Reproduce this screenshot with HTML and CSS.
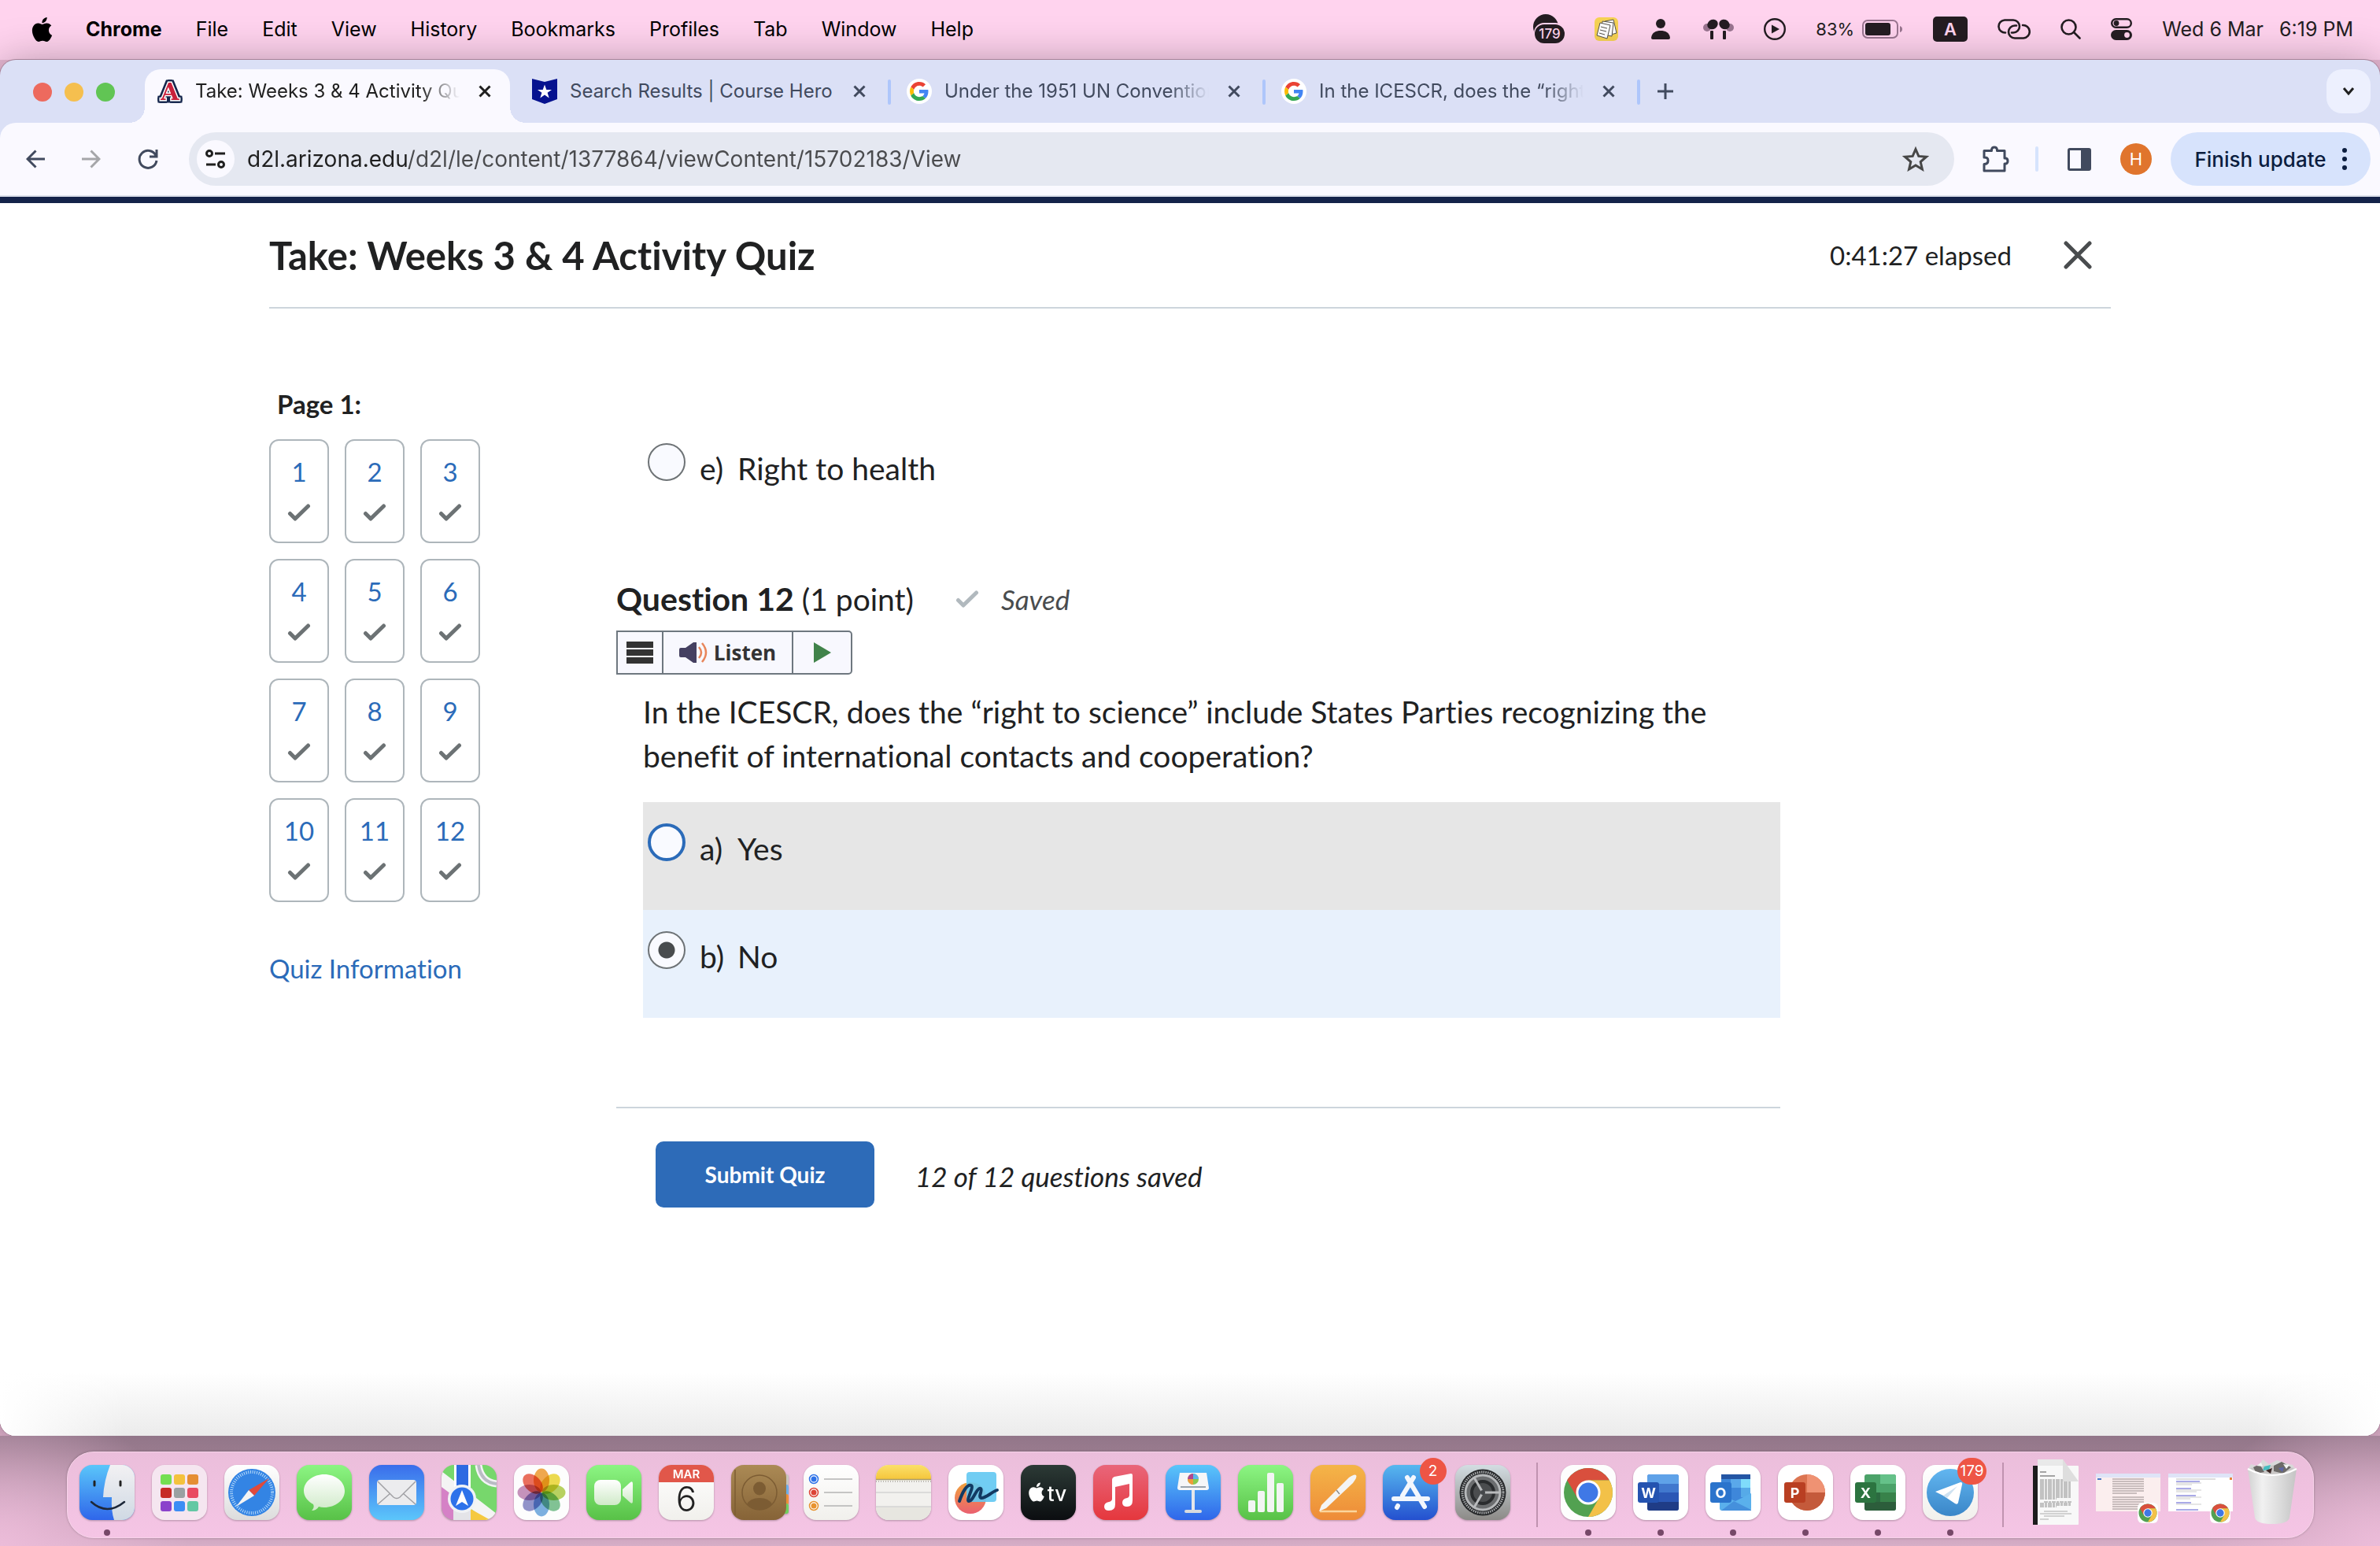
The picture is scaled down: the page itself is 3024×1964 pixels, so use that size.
FILE: index.html
```html
<!DOCTYPE html>
<html lang="en">
<head>
<meta charset="utf-8">
<meta name="viewport" content="width=device-width, initial-scale=1">
<title>Take: Weeks 3 &amp; 4 Activity Quiz</title>
<link rel="stylesheet" href="styles.css">
</head>
<body>
<svg class="defs" width="0" height="0" aria-hidden="true">
  <defs>
    <linearGradient id="g-sky" x1="0" y1="0" x2="0" y2="1"><stop offset="0" stop-color="#5ac6fa"/><stop offset="1" stop-color="#2f66ea"/></linearGradient>
    <linearGradient id="g-mail" x1="0" y1="0" x2="0" y2="1"><stop offset="0" stop-color="#3a6deb"/><stop offset="1" stop-color="#5cc6fb"/></linearGradient>
    <linearGradient id="g-green" x1="0" y1="0" x2="0" y2="1"><stop offset="0" stop-color="#8cf583"/><stop offset="1" stop-color="#58c147"/></linearGradient>
    <linearGradient id="g-white" x1="0" y1="0" x2="0" y2="1"><stop offset="0" stop-color="#ffffff"/><stop offset="1" stop-color="#dcdcdc"/></linearGradient>
    <linearGradient id="g-paper" x1="0" y1="0" x2="0" y2="1"><stop offset="0" stop-color="#ffffff"/><stop offset="1" stop-color="#f1f0ec"/></linearGradient>
    <linearGradient id="g-face" x1="0" y1="0" x2="0" y2="1"><stop offset="0" stop-color="#f2f1f3"/><stop offset="1" stop-color="#cfd9e4"/></linearGradient>
    <linearGradient id="g-brown" x1="0" y1="0" x2="0" y2="1"><stop offset="0" stop-color="#ab8a55"/><stop offset="1" stop-color="#866337"/></linearGradient>
    <linearGradient id="g-yellow" x1="0" y1="0" x2="0" y2="1"><stop offset="0" stop-color="#fbe06a"/><stop offset="1" stop-color="#f5c63c"/></linearGradient>
    <linearGradient id="g-black" x1="0" y1="0" x2="0" y2="1"><stop offset="0" stop-color="#2c3a36"/><stop offset="1" stop-color="#0b0d10"/></linearGradient>
    <linearGradient id="g-red" x1="0" y1="0" x2="0" y2="1"><stop offset="0" stop-color="#e9667a"/><stop offset="1" stop-color="#e5373d"/></linearGradient>
    <linearGradient id="g-orange" x1="0" y1="0" x2="0" y2="1"><stop offset="0" stop-color="#f4b548"/><stop offset="1" stop-color="#ee8b38"/></linearGradient>
    <linearGradient id="g-store" x1="0" y1="0" x2="0" y2="1"><stop offset="0" stop-color="#57b8ef"/><stop offset="1" stop-color="#2450cf"/></linearGradient>
    <linearGradient id="g-steel" x1="0" y1="0" x2="0" y2="1"><stop offset="0" stop-color="#d3dde2"/><stop offset="1" stop-color="#8c8a87"/></linearGradient>
    <linearGradient id="g-tele" x1="0" y1="0" x2="0" y2="1"><stop offset="0" stop-color="#62b6f0"/><stop offset="1" stop-color="#3a86c8"/></linearGradient>
    <linearGradient id="g-free" x1="0" y1="0" x2="0" y2="1"><stop offset="0" stop-color="#f0a23c"/><stop offset="1" stop-color="#ea6070"/></linearGradient>
    <linearGradient id="g-bubble" x1="0" y1="0" x2="0" y2="1"><stop offset="0" stop-color="#ffffff"/><stop offset="1" stop-color="#cfeac8"/></linearGradient>
    <linearGradient id="g-bin" x1="0" y1="0" x2="1" y2="0"><stop offset="0" stop-color="#d2d2d2"/><stop offset=".3" stop-color="#f1f1f1"/><stop offset=".7" stop-color="#d9d9d9"/><stop offset="1" stop-color="#c4c4c4"/></linearGradient>
    <clipPath id="tile"><rect width="70" height="70" rx="16"/></clipPath>
    <symbol id="check" viewBox="0 0 30 22"><path d="M3.500 12.500L10 19L26.500 3" fill="none" stroke="currentColor" stroke-width="5" stroke-linecap="round" stroke-linejoin="round"/></symbol>
    <symbol id="cross" viewBox="0 0 16 16"><path d="M1.500 1.500L14.500 14.500M14.500 1.500L1.500 14.500" stroke="currentColor" stroke-width="3"/></symbol>
    <symbol id="google" viewBox="0 0 64 64">
      <circle cx="32" cy="32" r="32" fill="#fff"/>
      <g transform="translate(8 8)">
        <path fill="#EA4335" d="M24 9.500c3.540 0 6.710 1.220 9.210 3.600l6.850-6.850C35.900 2.380 30.470 0 24 0 14.620 0 6.510 5.380 2.560 13.220l7.980 6.190C12.430 13.720 17.740 9.500 24 9.500z"/>
        <path fill="#4285F4" d="M46.980 24.550c0-1.570-.15-3.090-.38-4.550H24v9.020h12.940c-.58 2.960-2.260 5.480-4.780 7.180l7.730 6c4.510-4.180 7.090-10.360 7.090-17.650z"/>
        <path fill="#FBBC05" d="M10.530 28.590c-.48-1.450-.76-2.990-.76-4.590s.27-3.140.76-4.590l-7.980-6.190C.92 16.460 0 20.120 0 24c0 3.880.92 7.540 2.560 10.780l7.970-6.190z"/>
        <path fill="#34A853" d="M24 48c6.480 0 11.930-2.130 15.890-5.810l-7.730-6c-2.150 1.450-4.920 2.300-8.160 2.300-6.260 0-11.570-4.220-13.470-9.910l-7.980 6.190C6.510 42.620 14.620 48 24 48z"/>
      </g>
    </symbol>
    <symbol id="apple" viewBox="0 0 24 24"><path fill="currentColor" d="M12.152 6.896c-.948 0-2.415-1.078-3.960-1.040-2.040.027-3.910 1.183-4.961 3.014-2.117 3.675-.546 9.103 1.519 12.090 1.013 1.454 2.208 3.090 3.792 3.039 1.520-.065 2.090-.987 3.935-.987 1.831 0 2.350.987 3.960.948 1.637-.026 2.676-1.480 3.676-2.948 1.156-1.688 1.636-3.325 1.662-3.415-.039-.013-3.182-1.221-3.220-4.857-.026-3.040 2.480-4.494 2.597-4.559-1.429-2.090-3.623-2.324-4.390-2.376-2-.156-3.675 1.090-4.610 1.090zM15.530 3.830c.843-1.012 1.400-2.427 1.245-3.830-1.207.052-2.662.805-3.532 1.818-.78.896-1.454 2.338-1.273 3.714 1.338.104 2.715-.688 3.560-1.702"/></symbol>
    <symbol id="chrome" viewBox="0 0 70 70">
      <rect width="70" height="70" rx="16" fill="#fdfdfd"/>
      <g transform="translate(35 35)">
        <circle r="31" fill="#52a151"/>
        <path fill="#d94f3d" d="M-26.800-15.500A31 31 0 0 1 26.800-15.500L0-15.500L-13.400 7.750Z"/>
        <path fill="#f3c148" d="M26.800-15.500A31 31 0 0 1 0 31L13.400 7.750L0-15.500Z"/>
        <circle r="15.500" fill="#fff"/><circle r="12.500" fill="#3f78e6"/>
      </g>
    </symbol>
  </defs>
</svg>

<header class="menubar">
  <nav class="menus" aria-label="Menu bar">
    <button class="menu-logo" aria-label="Apple"><svg width="31" height="31"><use href="#apple"/></svg></button>
    <button class="menu menu-app">Chrome</button>
    <button class="menu">File</button>
    <button class="menu">Edit</button>
    <button class="menu">View</button>
    <button class="menu">History</button>
    <button class="menu">Bookmarks</button>
    <button class="menu">Profiles</button>
    <button class="menu">Tab</button>
    <button class="menu">Window</button>
    <button class="menu">Help</button>
  </nav>
  <div class="status">
    <svg width="40" height="38" viewBox="0 0 40 38"><circle cx="16" cy="16" r="16" fill="#241d22"/><rect x="1" y="11" width="40" height="27" rx="13" fill="#ffd3ee"/><rect x="2" y="13" width="38" height="24" rx="12" fill="#241d22"/><text x="21" y="31" font-size="17" text-anchor="middle" fill="#ffd3ee" font-weight="500">179</text></svg>
    <svg width="30" height="30" viewBox="0 0 30 30"><rect width="30" height="30" rx="6" fill="#f6d253"/><g fill="#fff" stroke="#55524a" stroke-width="1"><path d="M13 5L24 3L28 20L17 23Z"/><path d="M10 5L24 7L22 24L8 21Z"/><path d="M7 7L20 10L16 27L3 23Z"/><path d="M8 12L16 14M7 16L15 18M6 20L13 22"/></g></svg>
    <svg class="wide" width="24" height="26" viewBox="0 0 24 26"><circle cx="12" cy="6" r="6" fill="#241d22"/><path fill="#241d22" d="M0 24C1 17 6 15 12 15S23 17 24 24Q24 26 22 26H2Q0 26 0 24Z"/></svg>
    <svg width="39" height="26" viewBox="0 0 39 26"><g fill="#9a7590"><circle cx="5" cy="11" r="5"/><circle cx="34" cy="11" r="5"/></g><g fill="#241d22"><ellipse cx="12" cy="7" rx="7" ry="6" transform="rotate(-35 12 7)"/><ellipse cx="27" cy="7" rx="7" ry="6" transform="rotate(35 27 7)"/><rect x="9" y="15" width="4" height="11" rx="1"/><rect x="25" y="15" width="4" height="11" rx="1"/></g></svg>
    <svg width="28" height="28" viewBox="0 0 28 28"><circle cx="14" cy="14" r="12.800" fill="none" stroke="#241d22" stroke-width="2.400"/><path d="M10 8.500L20 14L10 19.500Z" fill="#241d22"/></svg>
    <span class="battery">83%<svg width="52" height="24" viewBox="0 0 52 24"><rect x="1" y="1" width="44" height="22" rx="6" fill="none" stroke="#9a7590" stroke-width="2"/><rect x="4" y="4" width="32" height="16" rx="3" fill="#241d22"/><path d="M48 8Q51 9 51 12T48 16Z" fill="#9a7590"/></svg></span>
    <svg width="44" height="32" viewBox="0 0 44 32"><rect width="44" height="32" rx="5" fill="#241d22"/><text x="22" y="24" font-size="22" font-weight="600" text-anchor="middle" fill="#ffd3ee">A</text></svg>
    <svg width="42" height="26" viewBox="0 0 42 26"><g fill="none" stroke="#241d22" stroke-width="2.600" stroke-linecap="round"><path d="M10 17.500A8 8 0 0 1 9 1.500H20A8 8 0 0 1 20 17.500H18"/><path d="M32 8A8 8 0 0 1 33 24.500H22A8 8 0 0 1 22 8.500H24"/></g></svg>
    <svg width="26" height="26" viewBox="0 0 26 26"><g fill="none" stroke="#241d22" stroke-width="2.600" stroke-linecap="round"><circle cx="10.500" cy="10.500" r="9"/><path d="M17 17L24.500 24.500"/></g></svg>
    <svg width="27" height="28" viewBox="0 0 27 28"><rect x="1.200" y="1.200" width="24.600" height="10.600" rx="5.300" fill="none" stroke="#241d22" stroke-width="2.400"/><circle cx="7" cy="6.500" r="3.400" fill="#241d22"/><rect y="15" width="27" height="13" rx="6.500" fill="#241d22"/><circle cx="20.500" cy="21.500" r="3.400" fill="#ffd3ee"/></svg>
    <time class="clock"><span>Wed 6 Mar</span><span>6:19 PM</span></time>
  </div>
</header>

<main class="window">
  <div class="tabstrip">
    <div class="lights"><button class="light close" aria-label="Close"></button><button class="light min" aria-label="Minimise"></button><button class="light max" aria-label="Zoom"></button></div>
    <div class="tab active">
      <svg class="crest" width="32" height="30" viewBox="0 0 32 30"><text x="16" y="26" text-anchor="middle">A</text></svg>
      <span class="tab-title fade">Take: Weeks 3 &amp; 4 Activity Quiz</span>
      <button class="tab-close" aria-label="Close tab"><svg width="16" height="16"><use href="#cross"/></svg></button>
    </div>
    <div class="tab">
      <svg width="32" height="32" viewBox="0 0 32 32"><path fill="#06128f" d="M0 0L16 4L32 0V26L16 32L0 26Z"/><path fill="#fff" d="M16 7.500L18.300 14H25L19.600 17.800L21.700 24.500L16 20.500L10.300 24.500L12.400 17.800L7 14H13.700Z"/></svg>
      <span class="tab-title">Search Results | Course Hero</span>
      <button class="tab-close" aria-label="Close tab"><svg width="16" height="16"><use href="#cross"/></svg></button>
    </div>
    <div class="tab">
      <svg width="32" height="32"><use href="#google"/></svg>
      <span class="tab-title fade">Under the 1951 UN Convention</span>
      <button class="tab-close" aria-label="Close tab"><svg width="16" height="16"><use href="#cross"/></svg></button>
    </div>
    <div class="tab">
      <svg width="32" height="32"><use href="#google"/></svg>
      <span class="tab-title fade">In the ICESCR, does the “right</span>
      <button class="tab-close" aria-label="Close tab"><svg width="16" height="16"><use href="#cross"/></svg></button>
    </div>
    <button class="new-tab" aria-label="New tab"><svg width="20" height="20" viewBox="0 0 20 20"><path d="M10 0V20M0 10H20" stroke="#414a5e" stroke-width="3"/></svg></button>
    <button class="tab-search" aria-label="Search tabs"><svg width="16" height="12" viewBox="0 0 16 12"><path d="M2 2L8 9L14 2" fill="none" stroke="#1f1f1f" stroke-width="3"/></svg></button>
  </div>

  <div class="toolbar">
    <div class="nav">
      <button aria-label="Back"><svg width="24" height="24" viewBox="0 0 24 24"><path d="M24 12H2M12.500 1.500L2 12L12.500 22.500" fill="none" stroke="#414a5e" stroke-width="3"/></svg></button>
      <button aria-label="Forward"><svg width="24" height="24" viewBox="0 0 24 24"><path d="M0 12H22M11.500 1.500L22 12L11.500 22.500" fill="none" stroke="#a5a6a9" stroke-width="3"/></svg></button>
      <button aria-label="Reload"><svg width="26" height="26" viewBox="0 0 26 26"><path d="M23 8.500A11 11 0 1 0 24 15M24 1V10H15" fill="none" stroke="#414a5e" stroke-width="3"/></svg></button>
    </div>
    <div class="omnibox">
      <button class="site-info" aria-label="View site information"><svg width="26" height="24" viewBox="0 0 26 24"><g fill="none" stroke="#1f1f1f" stroke-width="3"><circle cx="5" cy="5" r="3.500"/><path d="M12 5H25M1 19H13"/><circle cx="20" cy="19" r="3.500"/></g></svg></button>
      <input class="url" type="text" aria-label="Address and search bar" value="d2l.arizona.edu/d2l/le/content/1377864/viewContent/15702183/View">
      <button aria-label="Bookmark this tab"><svg width="34" height="32" viewBox="0 0 34 32"><path d="M17 3.500L20.800 12.400L30.500 13.200L23.200 19.600L25.400 29L17 24L8.600 29L10.800 19.600L3.500 13.200L13.200 12.400Z" fill="none" stroke="#474747" stroke-width="3"/></svg></button>
    </div>
    <button class="ext" aria-label="Extensions"><svg width="34" height="34" viewBox="0 0 34 34"><path d="M2 6.500H11.500V5Q12 2 15 2T18.500 5V6.500H28V16H29.500Q32 16.500 32 19.500T29.500 23H28V32H2V23.500Q7 23.500 7 19T2 15Z" fill="none" stroke="#414a5e" stroke-width="3" stroke-linejoin="round"/></svg></button>
    <span class="divider"></span>
    <button class="panel" aria-label="Side panel"><svg width="30" height="29" viewBox="0 0 30 29"><rect x="1.500" y="1.500" width="27" height="26" rx="1.500" fill="none" stroke="#414a5e" stroke-width="3"/><rect x="17" y="1" width="12" height="27" fill="#414a5e"/></svg></button>
    <button class="avatar">H</button>
    <button class="update">Finish update<svg width="6" height="28" viewBox="0 0 6 28"><g fill="#0b1d3f"><circle cx="3" cy="3" r="3"/><circle cx="3" cy="14" r="3"/><circle cx="3" cy="25" r="3"/></g></svg></button>
  </div>

  <div class="page">
    <div class="quiz">
      <header class="quiz-head">
        <h1>Take: Weeks 3 &amp; 4 Activity Quiz</h1>
        <span>0:41:27 elapsed</span>
        <button aria-label="Close quiz"><svg width="36" height="36" viewBox="0 0 36 36"><path d="M3 3L33 33M33 3L3 33" stroke="#494c4e" stroke-width="5" stroke-linecap="round"/></svg></button>
      </header>
      <div class="quiz-body">
        <aside class="side">
          <h2>Page 1:</h2>
          <nav class="questions" aria-label="Questions">
            <a href="#q1">1<svg width="30" height="22"><use href="#check"/></svg></a>
            <a href="#q2">2<svg width="30" height="22"><use href="#check"/></svg></a>
            <a href="#q3">3<svg width="30" height="22"><use href="#check"/></svg></a>
            <a href="#q4">4<svg width="30" height="22"><use href="#check"/></svg></a>
            <a href="#q5">5<svg width="30" height="22"><use href="#check"/></svg></a>
            <a href="#q6">6<svg width="30" height="22"><use href="#check"/></svg></a>
            <a href="#q7">7<svg width="30" height="22"><use href="#check"/></svg></a>
            <a href="#q8">8<svg width="30" height="22"><use href="#check"/></svg></a>
            <a href="#q9">9<svg width="30" height="22"><use href="#check"/></svg></a>
            <a href="#q10">10<svg width="30" height="22"><use href="#check"/></svg></a>
            <a href="#q11">11<svg width="30" height="22"><use href="#check"/></svg></a>
            <a href="#q12">12<svg width="30" height="22"><use href="#check"/></svg></a>
          </nav>
          <a class="info" href="#info">Quiz Information</a>
        </aside>
        <form class="main">
          <div class="indent"><label class="option"><input type="radio" name="q11"><span class="letter">e)</span><span>Right to health</span></label></div>
          <div class="q-head" id="q12">
            <h2><b>Question 12</b> (1 point)</h2>
            <svg class="saved-check" width="30" height="22"><use href="#check"/></svg>
            <em>Saved</em>
          </div>
          <div class="listen">
            <button type="button" class="l-menu" aria-label="Reader menu"><svg width="34" height="28" viewBox="0 0 34 28"><path d="M0 4H34M0 14H34M0 24H34" stroke="#333" stroke-width="8"/></svg></button>
            <button type="button" class="l-main"><svg width="36" height="26" viewBox="0 0 36 26"><path fill="#454061" d="M0 9Q0 7 2 7H8L18 0H22V26H18L8 19H2Q0 19 0 17Z"/><path d="M25 6Q31 13 25 20M29 1Q39 13 29 25" fill="none" stroke="#e8855a" stroke-width="2.500"/></svg>Listen</button>
            <button type="button" class="l-play" aria-label="Play"><svg width="22" height="26" viewBox="0 0 22 26"><path d="M0 0L22 13L0 26Z" fill="#41834a"/></svg></button>
          </div>
          <fieldset class="indent">
            <legend>In the ICESCR, does the “right to science” include States Parties recognizing the benefit of international contacts and cooperation?</legend>
            <label class="option hover"><input type="radio" name="q12"><span class="letter">a)</span><span>Yes</span></label>
            <label class="option selected"><input type="radio" name="q12" checked><span class="letter">b)</span><span>No</span></label>
          </fieldset>
          <div class="submit">
            <button type="button">Submit Quiz</button>
            <em>12 of 12 questions saved</em>
          </div>
        </form>
      </div>
    </div>
  </div>
</main>

<footer class="desktop">
  <nav class="dock" aria-label="Dock">
    <button class="app running" aria-label="Finder"><svg viewBox="0 0 70 70"><g clip-path="url(#tile)"><rect width="70" height="70" fill="url(#g-sky)"/><path fill="url(#g-face)" d="M39 0Q31 20 30 41H41Q40 58 44 70H70V0Z"/></g><path d="M19 21V26M52 21V26" stroke="#222" stroke-width="3" stroke-linecap="round"/><path d="M15 47Q35 65 57 47" fill="none" stroke="#1d2738" stroke-width="2.500" stroke-linecap="round"/></svg></button>
    <button class="app" aria-label="Launchpad"><svg viewBox="0 0 70 70"><rect width="70" height="70" rx="16" fill="#f5e6f0"/><g><rect x="11" y="12" width="14" height="13" rx="3" fill="#74df52"/><rect x="28" y="12" width="14" height="13" rx="3" fill="#f4c23d"/><rect x="45" y="12" width="14" height="13" rx="3" fill="#e58e34"/><rect x="11" y="29" width="14" height="13" rx="3" fill="#c62b26"/><rect x="28" y="29" width="14" height="13" rx="3" fill="#9aa0a2"/><rect x="45" y="29" width="14" height="13" rx="3" fill="#e94a62"/><rect x="11" y="46" width="14" height="13" rx="3" fill="#8b42cb"/><rect x="28" y="46" width="14" height="13" rx="3" fill="#3c8df5"/><rect x="45" y="46" width="14" height="13" rx="3" fill="#63c8a4"/></g></svg></button>
    <button class="app" aria-label="Safari"><svg viewBox="0 0 70 70"><rect width="70" height="70" rx="16" fill="url(#g-white)"/><circle cx="35" cy="35" r="30" fill="#3384e4"/><circle cx="35" cy="35" r="26" fill="none" stroke="#b9dcfa" stroke-width="4" stroke-dasharray="1 1.720"/><path fill="#e04a3c" d="M57 17L31 32L38 39Z"/><path fill="#f4f4f4" d="M15 53L31 32L38 39Z"/></svg></button>
    <button class="app" aria-label="Messages"><svg viewBox="0 0 70 70"><rect width="70" height="70" rx="16" fill="url(#g-green)"/><path fill="url(#g-bubble)" d="M35 12C49 12 61 21 61 33S49 54 35 54Q31 54 28 53Q25 58 19 58Q23 54 21 50C14 46 9 40 9 33C9 21 21 12 35 12Z"/></svg></button>
    <button class="app" aria-label="Mail"><svg viewBox="0 0 70 70"><rect width="70" height="70" rx="16" fill="url(#g-mail)"/><rect x="10" y="19" width="50" height="32" rx="4" fill="#ececee"/><path d="M11 21L31 41Q35 44 39 41L59 21M11 50L27 36M59 50L43 36" fill="none" stroke="#a0a0a4" stroke-width="1.500"/></svg></button>
    <button class="app" aria-label="Maps"><svg viewBox="0 0 70 70"><g clip-path="url(#tile)"><rect width="70" height="70" fill="#77d76c"/><path d="M0 26L15 40V70H0Z" fill="#d581c6"/><path d="M0 8L70 62V80L0 28Z" fill="#f4f4f4"/><path d="M15 40H37V70H15Z" fill="#e4e4e8"/><path d="M37 56L62 70H37Z" fill="#f5c93f"/><path d="M16 0H37V40H16Z" fill="#fff"/><path d="M19 0H34V40H19Z" fill="#2d6ae2"/><path d="M47 0Q50 22 70 24" fill="none" stroke="#f3f3f5" stroke-width="9"/><path d="M47 0Q50 22 70 24" fill="none" stroke="#b9bcc4" stroke-width="4"/></g><circle cx="26" cy="43" r="18" fill="#f0f2f5"/><circle cx="26" cy="43" r="14.500" fill="#2d72ea"/><path d="M26 32L34 52L26 47L18 52Z" fill="#fff"/></svg></button>
    <button class="app" aria-label="Photos"><svg viewBox="0 0 70 70"><rect width="70" height="70" rx="16" fill="#fdfdfd"/><g class="petals"><ellipse cx="35" cy="19.500" rx="10" ry="15" fill="#f0a03a"/><ellipse cx="35" cy="19.500" rx="10" ry="15" fill="#ecd83c" transform="rotate(45 35 35)"/><ellipse cx="35" cy="19.500" rx="10" ry="15" fill="#b2cf50" transform="rotate(90 35 35)"/><ellipse cx="35" cy="19.500" rx="10" ry="15" fill="#74be8a" transform="rotate(135 35 35)"/><ellipse cx="35" cy="19.500" rx="10" ry="15" fill="#6fa9de" transform="rotate(180 35 35)"/><ellipse cx="35" cy="19.500" rx="10" ry="15" fill="#8688c6" transform="rotate(225 35 35)"/><ellipse cx="35" cy="19.500" rx="10" ry="15" fill="#c187b6" transform="rotate(270 35 35)"/><ellipse cx="35" cy="19.500" rx="10" ry="15" fill="#e9604c" transform="rotate(315 35 35)"/></g></svg></button>
    <button class="app" aria-label="FaceTime"><svg viewBox="0 0 70 70"><rect width="70" height="70" rx="16" fill="url(#g-green)"/><rect x="10" y="19" width="34" height="32" rx="8" fill="url(#g-bubble)"/><path d="M46 31L56 22Q59 20 59 24V46Q59 50 56 48L46 39Z" fill="url(#g-bubble)"/></svg></button>
    <button class="app" aria-label="Calendar"><svg viewBox="0 0 70 70"><g clip-path="url(#tile)"><rect width="70" height="70" fill="url(#g-paper)"/><rect width="70" height="22" fill="#e1574a"/></g><text x="35" y="17" font-size="15" font-weight="600" text-anchor="middle" fill="#fff">MAR</text><text x="35" y="59" font-size="44" font-weight="300" text-anchor="middle" fill="#222">6</text></svg></button>
    <button class="app" aria-label="Contacts"><svg viewBox="0 0 70 70"><rect x="62" y="12" width="11" height="14" rx="3" fill="#c9c5bc"/><rect x="62" y="25" width="11" height="14" rx="3" fill="#6cb0ea"/><rect x="62" y="37" width="11" height="14" rx="3" fill="#ef8f37"/><rect x="62" y="49" width="11" height="13" rx="3" fill="#70cf5f"/><rect width="70" height="70" rx="16" fill="url(#g-brown)"/><path d="M5 6V64" stroke="#7c5c33" stroke-width="1.500"/><circle cx="36" cy="35" r="22" fill="none" stroke="#7c5c33" stroke-width="1.500"/><ellipse cx="36" cy="30" rx="8" ry="8.500" fill="#7c5c33"/><path d="M20 50Q24 42 36 42T52 50Q46 57 36 57T20 50Z" fill="#7c5c33"/></svg></button>
    <button class="app" aria-label="Reminders"><svg viewBox="0 0 70 70"><rect width="70" height="70" rx="16" fill="url(#g-paper)"/><path d="M26 18H62M26 35H62M26 52H62" stroke="#b4b4b4" stroke-width="1.500"/><g fill="#fff" stroke-width="1.500"><circle cx="13" cy="18" r="5.500" stroke="#2f73e8"/><circle cx="13" cy="35" r="5.500" stroke="#dc4436"/><circle cx="13" cy="52" r="5.500" stroke="#e8932f"/></g><circle cx="13" cy="18" r="3.500" fill="#2f73e8"/><circle cx="13" cy="35" r="3.500" fill="#dc4436"/><circle cx="13" cy="52" r="3.500" fill="#e8932f"/></svg></button>
    <button class="app" aria-label="Notes"><svg viewBox="0 0 70 70"><g clip-path="url(#tile)"><rect width="70" height="70" fill="#f2f1ee"/><rect y="53" width="70" height="17" fill="#e7e6e0"/><rect width="70" height="18" fill="url(#g-yellow)"/><path d="M0 18.500H70" stroke="#a99a66" stroke-width="1.500"/><path d="M0 21H70" stroke="#b9b6ae" stroke-width="2" stroke-dasharray="1 2"/><path d="M0 35H70M0 53H70" stroke="#d3d3d3" stroke-width="1.500"/></g></svg></button>
    <button class="app" aria-label="Freeform"><svg viewBox="0 0 70 70"><rect width="70" height="70" rx="16" fill="#fff"/><circle cx="28" cy="42" r="20" fill="url(#g-free)"/><rect x="23" y="9" width="38" height="38" rx="4" fill="#62c8f2" opacity=".9"/><path d="M14 46C18 34 24 24 29 26C33 28 22 45 26 46C31 47 36 28 41 30C44 32 37 41 42 42C48 42 54 35 62 32" fill="none" stroke="#123a63" stroke-width="4" stroke-linecap="round"/></svg></button>
    <button class="app" aria-label="TV"><svg viewBox="0 0 70 70"><rect width="70" height="70" rx="16" fill="url(#g-black)"/><svg class="white" x="8" y="22" width="24" height="25"><use href="#apple"/></svg><text x="46" y="46" font-size="26" font-weight="500" text-anchor="middle" fill="#fff">tv</text></svg></button>
    <button class="app" aria-label="Music"><svg viewBox="0 0 70 70"><rect width="70" height="70" rx="16" fill="url(#g-red)"/><path fill="#fff" d="M24 19Q24 16 27 15L48 11Q50 11 50 13V45Q50 53 43 53Q37 53 37 48Q37 43 43 42Q46 41 46 38V24L28 28V50Q28 58 20 58Q14 58 14 53Q14 48 20 47Q24 46 24 43Z"/></svg></button>
    <button class="app" aria-label="Keynote"><svg viewBox="0 0 70 70"><rect width="70" height="70" rx="16" fill="url(#g-sky)"/><path d="M35 30V58" stroke="#e5e7ea" stroke-width="4"/><rect x="24" y="57" width="22" height="4" rx="2" fill="#d8dade"/><path d="M18 10H52L55 29Q55 32 52 32H18Q15 32 15 29Z" fill="#f6f6f8"/><path d="M19 28H51" stroke="#9aa4ae" stroke-width="2"/><circle cx="35" cy="18" r="7" fill="#8ac94f"/><path d="M35 18V11A7 7 0 0 1 42 18Z" fill="#5db6ea"/><path d="M35 18H28A7 7 0 0 1 35 11Z" fill="#b3468e"/><path d="M35 18V25A7 7 0 0 1 28 18Z" fill="#f09a3b"/></svg></button>
    <button class="app" aria-label="Numbers"><svg viewBox="0 0 70 70"><rect width="70" height="70" rx="16" fill="url(#g-green)"/><g fill="#f2f5f3"><rect x="13" y="45" width="9" height="15" rx="2"/><rect x="25" y="33" width="9" height="27" rx="2"/><rect x="37" y="10" width="9" height="50" rx="2"/><rect x="49" y="23" width="9" height="37" rx="2"/></g></svg></button>
    <button class="app" aria-label="Pages"><svg viewBox="0 0 70 70"><rect width="70" height="70" rx="16" fill="url(#g-orange)"/><path d="M12 59H59" stroke="#fbd59c" stroke-width="2.500"/><path fill="#f4f4f4" d="M11 59L14 51L49 16Q56 11 58 13Q60 15 54 23L20 55Z"/><path d="M33 32L37 37" stroke="#8b8b8b" stroke-width="1.500"/></svg></button>
    <button class="app" aria-label="App Store"><svg viewBox="0 0 70 70"><rect width="70" height="70" rx="16" fill="url(#g-store)"/><g stroke="#f3f7fd" stroke-width="6" stroke-linecap="round"><path d="M39 16L25 39M31 16L53 53M14 43H57M19 52L18 54"/></g></svg><span class="badge">2</span></button>
    <button class="app" aria-label="System Settings"><svg viewBox="0 0 70 70"><rect width="70" height="70" rx="16" fill="url(#g-steel)"/><circle cx="35" cy="35" r="29.500" fill="#26282a"/><circle cx="35" cy="35" r="26" fill="none" stroke="#a8aaac" stroke-width="3" stroke-dasharray="1.500 1.220"/><circle cx="35" cy="35" r="22" fill="#6b6d6f" stroke="#b6b8ba" stroke-width="3"/><circle cx="35" cy="35" r="14" fill="#4b4d4f" stroke="#2a2c2e" stroke-width="4"/><path d="M35 35H57M35 35L24 16M35 35L24 54" stroke="#b9bbbd" stroke-width="3"/><circle cx="35" cy="35" r="3" fill="#44474a"/></svg></button>
    <span class="rule"></span>
    <button class="app running" aria-label="Google Chrome"><svg><use href="#chrome"/></svg></button>
    <button class="app running" aria-label="Word"><svg viewBox="0 0 70 70"><rect width="70" height="70" rx="16" fill="#fff"/><rect x="18" y="12" width="40" height="46" rx="3" fill="#4178ce"/><path d="M18 24V15Q18 12 21 12H55Q58 12 58 15V24Z" fill="#5fa2e8"/><path d="M18 35H58V47H18Z" fill="#2b57b5"/><path d="M18 47H58V55Q58 58 55 58H21Q18 58 18 55Z" fill="#1f3c86"/><rect x="6" y="22" width="27" height="26" rx="3" fill="#2453b0"/><text x="19.500" y="42" font-size="18" font-weight="700" text-anchor="middle" fill="#fff">W</text></svg></button>
    <button class="app running" aria-label="Outlook"><svg viewBox="0 0 70 70"><rect width="70" height="70" rx="16" fill="#fff"/><rect x="20" y="12" width="37" height="46" rx="3" fill="#3e87da"/><path d="M20 12H57V18H20Z" fill="#2456a4"/><path d="M32 18H45V29H32Z" fill="#5aa8ea"/><path d="M45 18H57V29H45Z" fill="#7fdcfb"/><path d="M45 29H57V41H45Z" fill="#56aae8"/><path d="M18 38L38 46L58 36V55Q58 58 55 58H21Q18 58 18 55Z" fill="#5ab0ec"/><path d="M36 46L58 57V58H20Z" fill="#4590dc"/><rect x="6" y="22" width="27" height="26" rx="3" fill="#2b74cc"/><text x="19.500" y="42" font-size="18" font-weight="700" text-anchor="middle" fill="#fff">O</text></svg></button>
    <button class="app running" aria-label="PowerPoint"><svg viewBox="0 0 70 70"><rect width="70" height="70" rx="16" fill="#fff"/><circle cx="37" cy="35" r="23" fill="#dc7552"/><path d="M37 35V12A23 23 0 0 1 60 35Z" fill="#ef9273"/><path d="M14 35A23 23 0 0 0 60 35Z" fill="#c45a3b"/><rect x="8" y="22" width="27" height="26" rx="3" fill="#b93f22"/><text x="21.500" y="42" font-size="18" font-weight="700" text-anchor="middle" fill="#fff">P</text></svg></button>
    <button class="app running" aria-label="Excel"><svg viewBox="0 0 70 70"><rect width="70" height="70" rx="16" fill="#fff"/><rect x="18" y="12" width="40" height="46" rx="3" fill="#4ba269"/><path d="M38 12H55Q58 12 58 15V24H38Z" fill="#65c189"/><path d="M38 35H58V47H38Z" fill="#38824a"/><path d="M18 35H38V47H18Z" fill="#2c6a40"/><path d="M18 47H58V55Q58 58 55 58H21Q18 58 18 55Z" fill="#2c5d3b"/><rect x="6" y="22" width="27" height="26" rx="3" fill="#2c7440"/><text x="19.500" y="42" font-size="18" font-weight="700" text-anchor="middle" fill="#fff">X</text></svg></button>
    <button class="app running" aria-label="Telegram"><svg viewBox="0 0 70 70"><rect width="70" height="70" rx="16" fill="url(#g-paper)"/><circle cx="35" cy="35" r="30" fill="url(#g-tele)"/><path fill="#fff" d="M16 34L48 22Q51 22 50 25L45 48Q44 51 41 49L26 39Z"/><path d="M26 39L44 27L31 42" fill="#cfe2f1"/></svg><span class="badge">179</span></button>
    <span class="rule rule-docs"></span>
    <button class="doc" aria-label="Document"><svg width="58" height="84" viewBox="0 0 58 84"><path d="M6 0H38L46 12V20H6Z" fill="#e9e9e9"/><rect x="0" y="8" width="58" height="75" rx="1" fill="#f8f8f8"/><rect x="0" y="8" width="6" height="75" fill="#1c1c1c"/><path d="M9 16H17M9 21H28" stroke="#888" stroke-width="1.500"/><path d="M9 26H49M9 28H49M9 30H49M9 32H49M9 34H49M9 36H49M9 38H49M9 40H49M9 42H49M9 44H49M9 46H49M9 48H49M9 50H30M14 54H49M9 56H49M9 58H49M9 60H30" stroke="#8c8c8c" stroke-width="1.200" stroke-dasharray="5 1 3 1"/><path d="M14 66H44M9 69H49M14 72H40M9 76H20" stroke="#aaa" stroke-width="1"/><path d="M38 0L58 28H38Z" fill="#dedede"/></svg></button>
    <button class="thumb" aria-label="Minimised window"><svg width="82" height="48" viewBox="0 0 82 48"><rect width="82" height="48" fill="#fbeeee"/><rect width="82" height="5" fill="#dfe4f7"/><path d="M2 7H7" stroke="#4a79c8" stroke-width="2"/><path d="M21 7H61M21 10H61M21 13H61M21 16H61M21 19H61M21 22H61M21 25H52M21 30H61M21 33H61M21 36H61M21 39H61M21 42H61M21 45H61" stroke="#b9adad" stroke-width="1.500"/></svg><svg class="mini" width="26" height="26"><use href="#chrome"/></svg></button>
    <button class="thumb" aria-label="Minimised window"><svg width="82" height="48" viewBox="0 0 82 48"><rect width="82" height="48" fill="#fff"/><rect width="82" height="5" fill="#dfe4f7"/><path d="M10 7H60" stroke="#bbb" stroke-width="1"/><rect x="78" y="5" width="3" height="3" fill="#e8833a"/><path d="M10 10H40M10 19H29M10 28H35M10 37H29M10 46H38" stroke="#8e8fe0" stroke-width="1.500"/><path d="M10 12H42M10 21H42M10 30H42M10 39H42M10 14H30M10 23H36M10 32H28" stroke="#ccc" stroke-width="1"/></svg><svg class="mini" width="26" height="26"><use href="#chrome"/></svg></button>
    <button class="bin" aria-label="Bin"><svg width="64" height="84" viewBox="0 0 64 84"><path d="M1 13L5 6L14 9L20 0L28 6L38 1L50 5L58 7L62 13L54 19H12Z" fill="#d9d9d9"/><path d="M1 12Q32 20 63 12L54 74Q52 82 32 82T10 74Z" fill="url(#g-bin)"/><path d="M4 11Q32 4 60 11Q52 19 32 19T4 11Z" fill="#c9c7c6"/><path d="M8 10L16 6L22 16L12 18ZM34 8L44 3L56 10L46 18L34 15Z" fill="#6d6a68"/><path d="M22 9L30 7L28 13L20 14Z" fill="#46bdc0"/><path d="M24 14L32 11L30 18Z" fill="#3c2a28"/><path d="M40 11L47 10L45 16Z" fill="#5d65a8"/><path d="M12 8L18 4L20 9ZM46 6L54 7L50 12Z" fill="#f4f4f4"/><path d="M1 12Q32 28 63 12" fill="none" stroke="#fff" stroke-width="2"/></svg></button>
  </nav>
</footer>
</body>
</html>
```
FILE: styles.css
```css
* { box-sizing: border-box; }

body {
  margin: 0;
  min-height: 100vh;
  display: flex;
  flex-direction: column;
  font-family: Inter, "Liberation Sans", sans-serif;
  color: #202122;
  background: #e8b8d4;
}

button {
  margin: 0;
  padding: 0;
  border: 0;
  background: none;
  font: inherit;
  color: inherit;
  display: flex;
  align-items: center;
  justify-content: center;
}

svg { display: block; flex: none; }
.defs { position: absolute; }
.white { color: #fff; }

/* Menu bar */
.menubar {
  height: 76px;
  padding: 0 34px 2px 40px;
  display: flex;
  align-items: center;
  justify-content: space-between;
  background: #ffd3ee;
  font-size: 25px;
  line-height: 32px;
  color: #000;
}
.menus { display: flex; align-items: center; gap: 43px; }
.menu-logo { width: 26px; }
.menu-app { font-weight: 700; }
.status { display: flex; align-items: center; gap: 38px; color: #241d22; }
.status .wide { margin: 0 4px; }
.battery { display: flex; align-items: center; gap: 10px; font-size: 22px; }
.clock { display: flex; gap: 20px; }

/* Browser window */
.window {
  flex: 1;
  display: flex;
  flex-direction: column;
  border-radius: 20px;
  overflow: hidden;
  background: #dbe0f6;
  box-shadow: 0 0 0 1px #a88298, 0 10px 60px #0006;
}
.tabstrip { height: 80px; display: flex; align-items: center; }
.lights { display: flex; gap: 16px; width: 180px; padding: 2px 0 0 42px; }
.light { width: 24px; height: 24px; border-radius: 50%; }
.close { background: #ed6a5e; }
.min { background: #f5bf4f; }
.max { background: #61c554; }

.tab {
  position: relative;
  width: 476px;
  height: 80px;
  padding: 0 32px 0 20px;
  display: flex;
  align-items: center;
  gap: 16px;
  font-size: 24px;
  line-height: 32px;
  color: #414a5e;
}
.tab > * { position: relative; }
.tab-title {
  flex: 1;
  overflow: hidden;
  white-space: nowrap;
}
.fade {
  -webkit-mask-image: linear-gradient(90deg, #000 calc(100% - 50px), transparent);
  mask-image: linear-gradient(90deg, #000 calc(100% - 50px), transparent);
}
.tab-close { margin-left: 8px; }
.tab:not(.active)::after {
  content: "";
  position: absolute;
  right: 0;
  top: 25px;
  width: 4px;
  height: 32px;
  border-radius: 2px;
  background: #aec6fb;
}
.tab.active { color: #1f1f1f; }
.tab.active::before {
  content: "";
  position: absolute;
  left: 4px;
  right: 8px;
  top: 12px;
  bottom: 0;
  border-radius: 20px 20px 0 0;
  background: #faf9ff;
}
.tab.active::after {
  content: "";
  position: absolute;
  left: -16px;
  right: -12px;
  bottom: 0;
  height: 20px;
  background:
    radial-gradient(circle at 0 0, transparent 20px, #faf9ff 20px) left / 20px 20px no-repeat,
    radial-gradient(circle at 100% 0, transparent 20px, #faf9ff 20px) right / 20px 20px no-repeat;
}
.crest {
  overflow: visible;
  font-family: "DejaVu Serif", serif;
  font-weight: 700;
  font-size: 30px;
  fill: #c8203c;
  stroke: #fff;
  stroke-width: 3px;
  paint-order: stroke;
  filter: drop-shadow(2px 0 0 #14254c) drop-shadow(-2px 0 0 #14254c) drop-shadow(0 2px 0 #14254c) drop-shadow(0 -2px 0 #14254c);
}
.new-tab { margin-left: 22px; }
.tab-search {
  width: 56px;
  height: 56px;
  margin: 0 12px 0 auto;
  border-radius: 20px;
  background: #edf0fe;
}

.toolbar {
  height: 94px;
  padding: 0 12px 0 33px;
  display: flex;
  align-items: center;
  border-bottom: 2px solid #dbe0ea;
  border-radius: 20px 20px 0 0;
  background: #faf9ff;
}
.nav { display: flex; gap: 47px; width: 207px; }
.omnibox {
  flex: 1;
  height: 68px;
  padding: 0 32px 0 10px;
  display: flex;
  align-items: center;
  gap: 16px;
  border-radius: 34px;
  background: #e5e8f1;
}
.site-info { width: 48px; height: 48px; border-radius: 50%; background: #faf9ff; }
.url {
  flex: 1;
  min-width: 0;
  height: 40px;
  padding: 0;
  border: 0;
  outline: 0;
  font: 28px/40px Inter, "Liberation Sans", sans-serif;
  color: transparent;
  background: linear-gradient(90deg, #1f1f1f 204px, #4a4b4e 204px);
  -webkit-background-clip: text;
  background-clip: text;
}
.ext { margin-left: 36px; }
.divider { width: 4px; height: 32px; margin: 0 37px 0 33px; border-radius: 2px; background: #d6e4fd; }
.avatar {
  width: 40px;
  height: 40px;
  margin: 0 24px 0 37px;
  border-radius: 50%;
  background: #e0752d;
  color: #fff;
  font-size: 22px;
}
.update {
  width: 254px;
  height: 68px;
  gap: 20px;
  border-radius: 34px;
  background: #d7e3fc;
  font-size: 26px;
  font-weight: 500;
  color: #0b1d3f;
}

/* Quiz page */
.page {
  flex: 1;
  border-top: 8px solid #14234a;
  background:
    linear-gradient(90deg, #fff, #fff0 160px calc(100% - 160px), #fff),
    linear-gradient(0deg, #ebebeb, #fff 80px) #fff;
  font-family: Lato, "Liberation Sans", sans-serif;
  font-size: 33px;
  line-height: 40px;
  font-variant-ligatures: none;
}
.quiz { width: 78%; max-width: 2340px; margin: 0 auto; }
.quiz-head {
  height: 134px;
  padding-right: 24px;
  display: flex;
  align-items: center;
  gap: 66px;
  border-bottom: 2px solid #cdd5dc;
}
h1 { flex: 1; margin: 0; font-size: 49px; line-height: 56px; font-weight: 700; }
.quiz-body { display: flex; align-items: flex-start; }
.side { width: 441px; padding-top: 101px; }
.side h2 { margin: 0 0 25px 10px; font-size: 33px; font-weight: 700; }
.questions { display: grid; grid-template-columns: repeat(3, 76px); gap: 20px; margin-bottom: 64px; }
.questions a {
  height: 132px;
  padding-top: 19px;
  display: flex;
  flex-direction: column;
  align-items: center;
  gap: 21px;
  border: 2px solid #aeb6bb;
  border-radius: 12px;
  background: #fff;
}
.side a { color: #2b6bb9; text-decoration: none; }
.questions svg { color: #6c7274; }

.main { flex: 0 1 1479px; padding-top: 144px; }
.indent { margin: 0 0 0 34px; padding: 0; border: 0; min-width: 0; }
.option {
  height: 137px;
  padding: 27px 6px 0;
  display: flex;
  align-items: flex-start;
  font-size: 39px;
  line-height: 64px;
}
.option input {
  appearance: none;
  width: 48px;
  height: 48px;
  margin: 0 18px 0 0;
  border: 2px solid #6e7376;
  border-radius: 50%;
  background: #f9faff;
}
.option input:checked { background: radial-gradient(circle, #494c4e 10px, #f9faff 11px); }
.letter { width: 48px; }
.option.hover { background: #e6e6e6; }
.option.hover input { border: 4px solid #2b6bb9; }
.option.selected { background: #e8f1fc; }

.q-head { display: flex; align-items: center; margin: 64px 0 16px; }
.q-head h2 { margin: 0; font-size: 39px; line-height: 48px; font-weight: 400; }
.q-head b { font-size: 41px; }
.q-head em { color: #494c4e; }
.main em { font-size: 35px; }
.saved-check { margin: 0 28px 0 53px; color: #b1b9be; }

.listen {
  width: 300px;
  height: 56px;
  display: flex;
  border: 2px solid #6e777f;
  border-radius: 0 5px 5px 0;
  background: #f8f8fe;
  font: 700 26px/32px "Open Sans", "Liberation Sans", sans-serif;
  color: #333;
}
.l-menu { width: 58px; border-right: 2px solid #6e777f; }
.l-main { flex: 1; gap: 8px; border-right: 2px solid #6e777f; }
.l-play { width: 73px; }

legend { padding: 19px 0 31px; font-size: 39px; line-height: 56px; }

.submit {
  margin-top: 113px;
  padding: 42px 50px;
  display: flex;
  align-items: center;
  gap: 52px;
  border-top: 2px solid #cdd5dc;
}
.submit button {
  width: 278px;
  height: 84px;
  border-radius: 10px;
  background: #2d6bb8;
  color: #fff;
  font-size: 28px;
  font-weight: 700;
}
.submit em { padding-top: 4px; }

/* Dock */
.desktop {
  padding: 20px 0 10px;
  display: flex;
  justify-content: center;
  background:
    radial-gradient(ellipse 240px 180px at 0 100%, #ecbcd9, transparent),
    radial-gradient(ellipse 240px 180px at 100% 100%, #ecbcd9, transparent),
    linear-gradient(#927689, #997b8e 20px, #cda4be 126px, #d6aec7);
}
.dock {
  height: 110px;
  padding: 0 20px 0 15px;
  display: flex;
  align-items: center;
  gap: 22px;
  border: 1px solid #f8d3ea;
  border-radius: 34px;
  background: linear-gradient(#ebbedb, #f5c5e5);
  box-shadow: 0 0 3px #0004;
}
.app { position: relative; width: 70px; height: 70px; margin-bottom: 6px; }
.app > svg { width: 70px; height: 70px; overflow: visible; filter: drop-shadow(0 1px 1px #0004); }
.running::after {
  content: "";
  position: absolute;
  left: 31px;
  top: 82px;
  width: 8px;
  height: 8px;
  border-radius: 50%;
  background: #764868;
}
.badge {
  position: absolute;
  top: -9px;
  right: -11px;
  min-width: 34px;
  height: 34px;
  padding: 0 3px;
  border-radius: 17px;
  background: #ee5545;
  color: #fff;
  font-size: 19px;
  line-height: 34px;
  text-align: center;
}
.petals { mix-blend-mode: multiply; }
.petals ellipse { mix-blend-mode: multiply; opacity: .9; }
.rule { width: 2px; height: 82px; margin: 0 7px 0 11px; background: #c093b0; }
.rule-docs { margin: 0 15px 0 9px; }
.doc { margin-bottom: 6px; }
.thumb { position: relative; margin: 0 -6px 6px 0; }
.thumb + .thumb { margin-left: -6px; }
.mini { position: absolute; right: 3px; bottom: -15px; }
.bin { margin: 0 0 6px 2px; }
```
